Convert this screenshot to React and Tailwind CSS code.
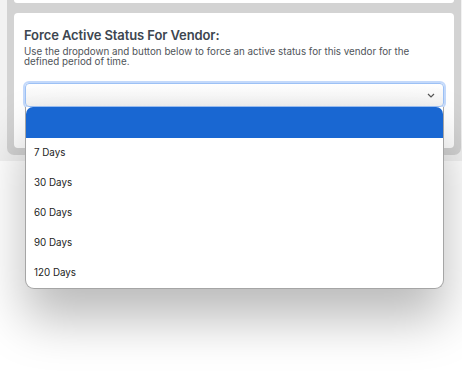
import React from "react";

const options = ["7 Days", "30 Days", "60 Days", "90 Days", "120 Days"];

export default function App() {
  return (
    <div
      className="w-[462px] h-[371px] overflow-hidden bg-white"
      style={{ fontFamily: "Inter, 'Noto Sans', sans-serif" }}
    >
      <div className="bg-[#f2f2f2] pl-[7px] pr-[1px] pb-[6px]">
        <div className="bg-[#d3d3d3] rounded-b-[7px] px-[7px] pb-[7px] flex flex-col gap-[10px]">
          <div className="h-[3px] bg-white rounded-b-[4px]" />
          <div className="bg-white rounded-[4px] pt-[14px] pl-[10px] pr-[11px] h-[135px] relative">
            <h2 className="text-[13px] font-semibold text-[#3d4650] leading-[16px] tracking-[-0.1px]">
              Force Active Status For Vendor:
            </h2>
            <p className="mt-[4px] text-[9.8px] leading-[10px] text-[#4f5459]">
              Use the dropdown and button below to force an active status for this vendor for the defined period of time.
            </p>
            <div className="relative mt-[16px] ml-[1px] mr-[-1px] z-10">
              <div className="h-[24px] rounded-[4px] border border-[#9dc1f5] ring-2 ring-[#c3d9fb] bg-gradient-to-b from-white to-[#f1f1f1] flex items-center justify-end pr-[8px]">
                <svg width="8" height="5" viewBox="0 0 8 5" className="text-[#555]">
                  <path d="M1 1 L4 4 L7 1" fill="none" stroke="currentColor" strokeWidth="1.2" />
                </svg>
              </div>
              <div className="absolute left-0 right-0 top-[24px] bg-white border-x border-b border-[#a5a5a5] rounded-b-[9px] shadow-[0_30px_50px_rgba(0,0,0,0.27)]">
                <div className="h-[31px] bg-[#1967d2] rounded-t-[7px]" />
                {options.map((o) => (
                  <div key={o} className="h-[30px] flex items-center pl-[8px] text-[9.8px] text-[#222]">
                    {o}
                  </div>
                ))}
              </div>
            </div>
          </div>
        </div>
      </div>
    </div>
  );
}
